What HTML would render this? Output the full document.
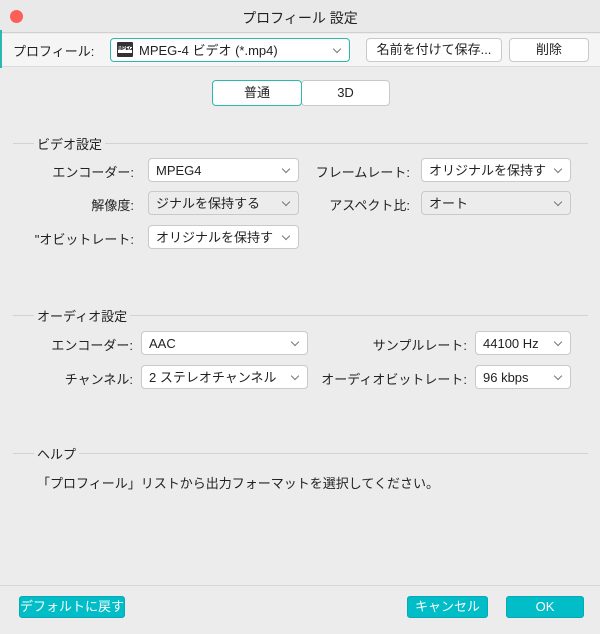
<!DOCTYPE html>
<html><head><meta charset="utf-8"><style>
*{box-sizing:border-box;margin:0;padding:0}
body{width:600px;height:634px;background:#ececec;font-family:"Liberation Sans","Noto Sans CJK JP",sans-serif;font-size:13px;color:#222;position:relative;overflow:hidden}
.a{position:absolute;white-space:nowrap}
.sel{position:absolute;background:#fff;border:1px solid #c9c9c9;border-radius:4px;height:24px;line-height:23px;padding-left:7px;font-size:13px;overflow:hidden}
.sel.g{background:#ececec}
.sel::after{content:"";position:absolute;right:9px;top:7px;width:5px;height:5px;border-right:1px solid #777;border-bottom:1px solid #777;transform:rotate(45deg)}
.btn{position:absolute;background:#fff;border:1px solid #c9c9c9;border-radius:4px;text-align:center;height:24px;line-height:22px;font-size:13px}
.lab{position:absolute;text-align:right;white-space:nowrap}
.hr{position:absolute;height:1px;background:#d2d2d2}
.sec{position:absolute;background:#ececec;padding:0 3px;font-size:13px}
.tb{position:absolute;background:#00bdc7;color:#fff;border:1px solid #08a9b2;border-radius:3px;height:22px;line-height:20px;text-align:center;font-size:13px}
</style></head><body>
<div class="a" style="left:0;top:0;width:600px;height:33px;background:#e9e9e9;border-bottom:1px solid #d0d0d0"></div>
<div class="a" style="left:10px;top:10px;width:13px;height:13px;border-radius:50%;background:#fc5f57"></div>
<div class="a" style="left:0;width:600px;top:8px;text-align:center;font-size:14px">プロフィール 設定</div>
<div class="a" style="left:0;top:34px;width:600px;height:33px;background:#f5f5f5;border-bottom:1px solid #dcdcdc"></div>
<div class="a" style="left:0;top:30px;width:2px;height:38px;background:#2bb8b0"></div>
<div class="a" style="left:13px;top:41px;font-size:13px">プロフィール:</div>
<div class="sel" style="left:110px;top:38px;width:240px;border:1px solid #2bb8b0;padding-left:28px">MPEG-4 ビデオ (*.mp4)</div>
<div class="a" style="left:117px;top:42px;width:16px;height:15px;background:#333;border-radius:1px"><div style="position:absolute;left:1px;top:4px;width:14px;height:7px;background:#fff;font-size:5px;line-height:7px;color:#000;text-align:center;font-weight:bold">MPEG</div></div>
<div class="btn" style="left:366px;top:38px;width:136px">名前を付けて保存...</div>
<div class="btn" style="left:509px;top:38px;width:80px">削除</div>
<div class="btn" style="left:212px;top:80px;width:90px;height:26px;line-height:24px;border:1px solid #2bb8b0;z-index:2">普通</div>
<div class="btn" style="left:301px;top:80px;width:89px;height:26px;line-height:24px">3D</div>

<div class="hr" style="left:13px;top:143px;width:575px"></div>
<div class="sec" style="left:34px;top:134px">ビデオ設定</div>
<div class="lab" style="right:466px;top:162px">エンコーダー:</div>
<div class="sel" style="left:148px;top:158px;width:151px">MPEG4</div>
<div class="lab" style="right:190px;top:162px">フレームレート:</div>
<div class="sel" style="left:421px;top:158px;width:150px">オリジナルを保持す</div>
<div class="lab" style="right:466px;top:195px">解像度:</div>
<div class="sel g" style="left:148px;top:191px;width:151px">ジナルを保持する</div>
<div class="lab" style="right:190px;top:195px">アスペクト比:</div>
<div class="sel g" style="left:421px;top:191px;width:150px">オート</div>
<div class="lab" style="right:466px;top:229px">"オビットレート:</div>
<div class="sel" style="left:148px;top:225px;width:151px">オリジナルを保持す</div>

<div class="hr" style="left:13px;top:315px;width:575px"></div>
<div class="sec" style="left:34px;top:306px">オーディオ設定</div>
<div class="lab" style="right:467px;top:335px">エンコーダー:</div>
<div class="sel" style="left:141px;top:331px;width:167px">AAC</div>
<div class="lab" style="right:133px;top:335px">サンプルレート:</div>
<div class="sel" style="left:475px;top:331px;width:96px">44100 Hz</div>
<div class="lab" style="right:467px;top:369px">チャンネル:</div>
<div class="sel" style="left:141px;top:365px;width:167px">2 ステレオチャンネル</div>
<div class="lab" style="right:133px;top:369px">オーディオビットレート:</div>
<div class="sel" style="left:475px;top:365px;width:96px">96 kbps</div>

<div class="hr" style="left:13px;top:453px;width:575px"></div>
<div class="sec" style="left:34px;top:444px">ヘルプ</div>
<div class="a" style="left:37px;top:473px">「プロフィール」リストから出力フォーマットを選択してください。</div>

<div class="hr" style="left:0;top:585px;width:600px;background:#d6d6d6"></div>
<div class="tb" style="left:19px;top:596px;width:106px">デフォルトに戻す</div>
<div class="tb" style="left:407px;top:596px;width:81px">キャンセル</div>
<div class="tb" style="left:506px;top:596px;width:78px">OK</div>
</body></html>
